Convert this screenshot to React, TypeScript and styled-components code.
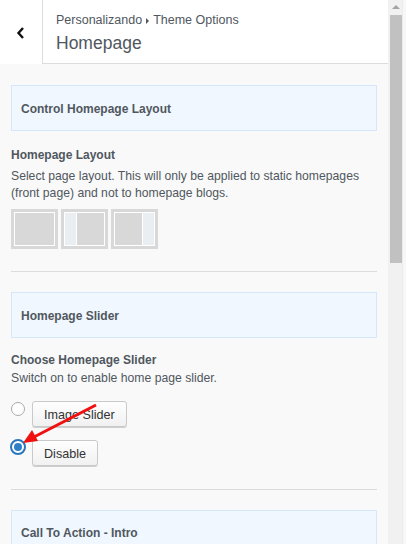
import styled, { createGlobalStyle } from 'styled-components';

const Global = createGlobalStyle`
  html, body {
    margin: 0;
    padding: 0;
    background: #f9f9f9;
  }
  body {
    font-family: 'Liberation Sans', Arial, sans-serif;
    overflow: hidden;
  }
`;

const Frame = styled.div`
  display: flex;
  width: 406px;
  height: 544px;
  overflow: hidden;
`;

const Panel = styled.div`
  position: relative;
  width: 388px;
  flex-shrink: 0;
  display: flex;
  flex-direction: column;
  background: #f9f9f9;
`;

const Header = styled.div`
  display: flex;
  height: 64px;
  flex-shrink: 0;
`;

const BackButton = styled.div`
  width: 42px;
  background: #fff;
  display: flex;
  align-items: center;
  justify-content: center;
  padding-top: 2px;
`;

const TitleBox = styled.div`
  flex: 1;
  background: #fff;
  border-left: 1px solid #dcdcde;
  border-bottom: 1px solid #dcdcde;
  padding: 12px 0 0 13px;
  color: #50575e;
`;

const Crumb = styled.div`
  font-size: 12.5px;
  line-height: 16px;
  display: flex;
  align-items: center;
  gap: 4px;
`;

const Caret = styled.span`
  width: 0;
  height: 0;
  border-top: 3px solid transparent;
  border-bottom: 3px solid transparent;
  border-left: 3px solid #50575e;
  margin-top: 1px;
`;

const PageTitle = styled.div`
  font-size: 17.5px;
  line-height: 22px;
  margin-top: 4px;
`;

const Body = styled.div`
  padding: 21px 11px 0 11px;
  display: flex;
  flex-direction: column;
`;

const SectionBox = styled.div`
  height: 46px;
  box-sizing: border-box;
  background: #f0f7ff;
  border: 1px solid #d5e8fb;
  display: flex;
  align-items: center;
  padding: 1px 0 0 9px;
  font-size: 12px;
  font-weight: bold;
  color: #50575e;
`;

const FieldTitle = styled.div<{ $top: number }>`
  margin-top: ${(p) => p.$top}px;
  font-size: 12px;
  line-height: 17px;
  font-weight: bold;
  color: #50575e;
`;

const FieldDesc = styled.div<{ $top: number }>`
  font-size: 12.2px;
  line-height: 16.6px;
  color: #50575e;
  margin-top: ${(p) => p.$top}px;
`;

const LayoutRow = styled.div`
  display: flex;
  gap: 3px;
  margin-top: 8px;
`;

const LayoutThumb = styled.div`
  width: 47px;
  height: 40px;
  box-sizing: border-box;
  border: 3px solid #d8d8d8;
  background: #fff;
  padding: 1px;
  display: flex;
  gap: 1px;
`;

const Col = styled.div<{ $side?: boolean }>`
  background: ${(p) => (p.$side ? '#e8eef1' : '#d8d8d8')};
  flex: ${(p) => (p.$side ? '0 0 11px' : '1')};
`;

const Divider = styled.div<{ $top: number }>`
  height: 1px;
  background: #dcdcde;
  margin: ${(p) => p.$top}px 0 20px;
`;

const OptionList = styled.div`
  display: flex;
  flex-direction: column;
  gap: 13px;
  margin-top: 14px;
`;

const Option = styled.div`
  display: flex;
  align-items: flex-start;
  gap: 7px;
`;

const Radio = styled.span<{ $checked?: boolean }>`
  box-sizing: border-box;
  width: ${(p) => (p.$checked ? 16 : 14)}px;
  height: ${(p) => (p.$checked ? 16 : 14)}px;
  margin-left: ${(p) => (p.$checked ? -1 : 0)}px;
  margin-right: ${(p) => (p.$checked ? -1 : 0)}px;
  margin-top: ${(p) => (p.$checked ? -1 : 1)}px;
  border-radius: 50%;
  border: ${(p) => (p.$checked ? '2px solid #2a76bb' : '1px solid #a7aaad')};
  background: #fff;
  display: flex;
  align-items: center;
  justify-content: center;
  &::after {
    content: '';
    display: ${(p) => (p.$checked ? 'block' : 'none')};
    width: 8px;
    height: 8px;
    border-radius: 50%;
    background: #2f7fc6;
  }
`;

const Button = styled.button`
  height: 26px;
  box-sizing: border-box;
  padding: 2px 11px 0;
  border: 1px solid #c9c9c9;
  border-radius: 3px;
  background: linear-gradient(#fefefe, #f1f1f1);
  box-shadow: 0 1px 0 #cfcfcf;
  font-family: 'Liberation Sans', Arial, sans-serif;
  font-size: 12.6px;
  color: #333;
`;

const Arrow = styled.svg`
  position: absolute;
  left: 0;
  top: 0;
  pointer-events: none;
`;

const ScrollBar = styled.div`
  width: 14px;
  flex-shrink: 0;
  box-sizing: border-box;
  padding-left: 2px;
  background: #f1f1f1;
  display: flex;
  flex-direction: column;
  align-items: center;
`;

const ScrollArrow = styled.div`
  width: 0;
  height: 0;
  margin-top: 5px;
  border-left: 4px solid transparent;
  border-right: 4px solid transparent;
  border-bottom: 4px solid #a3a3a3;
`;

const Thumb = styled.div`
  width: 12px;
  margin-top: 6px;
  height: 248px;
  background: #c1c1c1;
`;

const Edge = styled.div`
  width: 4px;
  flex-shrink: 0;
  background: #f7f7f7;
  border-left: 1px solid #ececec;
  box-sizing: border-box;
`;

export default function App() {
  return (
    <>
      <Global />
      <Frame>
        <Panel>
          <Header>
            <BackButton>
              <svg width="10" height="14" viewBox="0 0 10 14">
                <polyline
                  points="7,2 2.5,7 7,12"
                  fill="none"
                  stroke="#111"
                  strokeWidth="2.4"
                />
              </svg>
            </BackButton>
            <TitleBox>
              <Crumb>
                Personalizando <Caret /> Theme Options
              </Crumb>
              <PageTitle>Homepage</PageTitle>
            </TitleBox>
          </Header>
          <Body>
            <SectionBox>Control Homepage Layout</SectionBox>
            <FieldTitle $top={16}>Homepage Layout</FieldTitle>
            <FieldDesc $top={4}>
              Select page layout. This will only be applied to static homepages
              (front page) and not to homepage blogs.
            </FieldDesc>
            <LayoutRow>
              <LayoutThumb>
                <Col />
              </LayoutThumb>
              <LayoutThumb>
                <Col $side />
                <Col />
              </LayoutThumb>
              <LayoutThumb>
                <Col />
                <Col $side />
              </LayoutThumb>
            </LayoutRow>
            <Divider $top={22} />
            <SectionBox>Homepage Slider</SectionBox>
            <FieldTitle $top={14}>Choose Homepage Slider</FieldTitle>
            <FieldDesc $top={1}>Switch on to enable home page slider.</FieldDesc>
            <OptionList>
              <Option>
                <Radio />
                <Button>Image Slider</Button>
              </Option>
              <Option>
                <Radio $checked />
                <Button>Disable</Button>
              </Option>
            </OptionList>
            <Divider $top={23} />
            <SectionBox>Call To Action - Intro</SectionBox>
          </Body>
          <Arrow width="120" height="544" viewBox="0 0 120 544">
            <line x1="96" y1="405" x2="34" y2="437" stroke="#f01010" strokeWidth="3" />
            <polygon points="23,443 32,430 38,441" fill="#f01010" />
          </Arrow>
        </Panel>
        <ScrollBar>
          <ScrollArrow />
          <Thumb />
        </ScrollBar>
        <Edge />
      </Frame>
    </>
  );
}
